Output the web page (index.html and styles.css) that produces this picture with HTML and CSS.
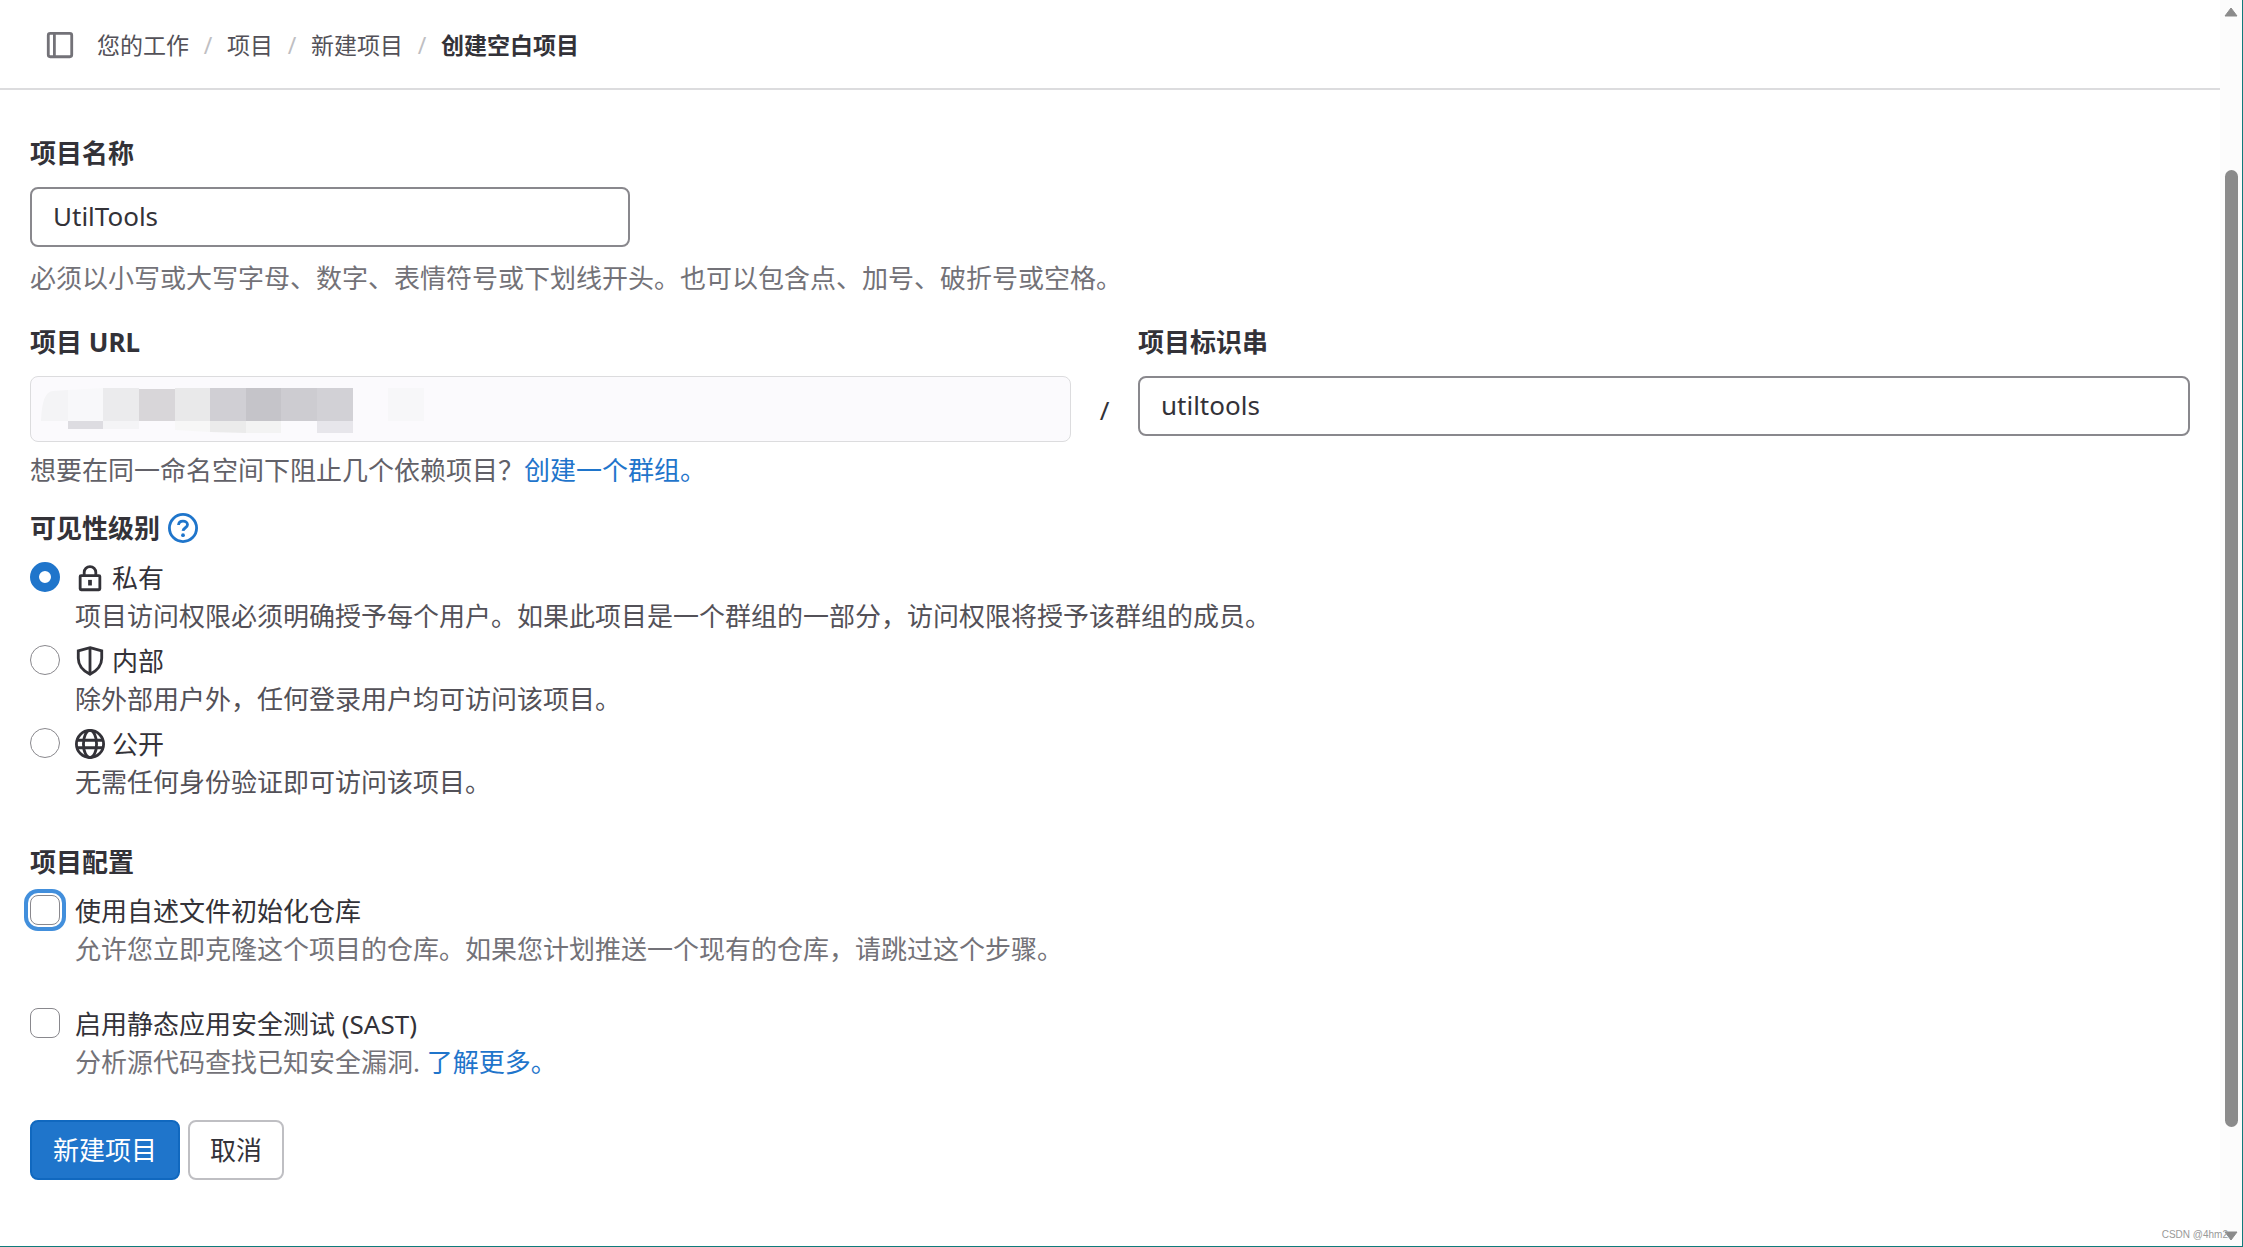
FILE: index.html
```html
<!DOCTYPE html>
<html lang="zh-CN">
<head>
<meta charset="utf-8">
<title>创建空白项目</title>
<link rel="stylesheet" href="styles.css">
</head>
<body>
<div class="window">
  <div class="page">
    <header class="topbar">
      <button class="sidebar-toggle" type="button" aria-label="侧边栏">
        <svg class="icon" viewBox="0 0 16 16" fill="none" stroke="currentColor" stroke-width="1.5"><rect x="1.75" y="1.75" width="12.5" height="12.5" rx="1"/><path d="M5 2v12"/></svg>
      </button>
      <nav aria-label="面包屑">
        <ol class="breadcrumbs">
          <li><a href="#">您的工作</a></li>
          <li><a href="#">项目</a></li>
          <li><a href="#">新建项目</a></li>
          <li><a href="#" class="current" aria-current="page">创建空白项目</a></li>
        </ol>
      </nav>
    </header>
    <main>
      <form class="form">
        <div class="field name-field">
          <label class="label" for="name">项目名称</label>
          <input class="input" id="name" type="text" value="UtilTools">
          <p class="help">必须以小写或大写字母、数字、表情符号或下划线开头。也可以包含点、加号、破折号或空格。</p>
        </div>
        <div class="path-row">
          <div class="field">
            <label class="label" for="url">项目 URL</label>
            <div class="url-box">
              <svg class="mosaic" viewBox="0 0 384 48" aria-hidden="true">
                <path fill="#f4f4f6" d="M0 34Q1 4 12 4L27 3V34Z"/>
                <path fill="#f8f8fa" d="M27 3L62 1V34H27Z"/>
                <path fill="#ebebed" d="M62 1H98V34H62Z"/>
                <path fill="#d8d6d9" d="M98 2H134V34H98Z"/>
                <path fill="#e9e9ea" d="M134 1H169V34H134Z"/>
                <path fill="#d0cfd4" d="M169 1H205V34H169Z"/>
                <path fill="#c5c4c9" d="M205 1H240V34H205Z"/>
                <path fill="#cdccd1" d="M240 1H276V34H240Z"/>
                <path fill="#d2d1d6" d="M276 1H312V34H276Z"/>
                <path fill="#f7f7f9" d="M347 1H383V34H347Z"/>
                <path fill="#dddce1" d="M27 34H62V42H27Z"/>
                <path fill="#f4f4f6" d="M62 34H98V42H62Z"/>
                <path fill="#f7f7f7" d="M134 34H169V45L134 43Z"/>
                <path fill="#ebebeb" d="M169 34H205V46L169 45Z"/>
                <path fill="#f3f3f3" d="M205 34H240V46H205Z"/>
                <path fill="#e7e6eb" d="M276 34H312V46H276Z"/>
              </svg>
              <input class="url-input" id="url" type="text" readonly>
            </div>
          </div>
          <span class="slash">/</span>
          <div class="field">
            <label class="label" for="slug">项目标识串</label>
            <input class="input" id="slug" type="text" value="utiltools">
          </div>
        </div>
        <p class="group-help">想要在同一命名空间下阻止几个依赖项目？<a href="#">创建一个群组。</a></p>

        <fieldset class="group visibility">
          <legend class="label">可见性级别
            <a class="help-link" href="#" aria-label="帮助"><svg class="icon" viewBox="0 0 16 16" fill="none" stroke="currentColor" stroke-width="1.5"><circle cx="8" cy="8" r="7.25"/><path d="M5.600 6.400C5.700 5 6.700 4.300 8 4.300s2.400.8 2.400 2c0 1.500-2.200 1.600-2.400 3.200"/><circle cx="8" cy="11.800" r="1" fill="currentColor" stroke="none"/></svg></a>
          </legend>
          <div class="choice">
            <input class="radio" type="radio" name="vis" id="private" checked>
            <div>
              <label class="choice-label" for="private"><svg class="icon" viewBox="0 0 16 16" fill="none" stroke="currentColor" stroke-width="1.5"><rect x="2.75" y="6.75" width="10.5" height="7.5" rx=".5"/><path d="M4.900 6.750V5a3.100 3.100 0 0 1 6.200 0v1.750"/><path d="M8 9v3" stroke-width="2"/></svg>私有</label>
              <p class="choice-desc">项目访问权限必须明确授予每个用户。如果此项目是一个群组的一部分，访问权限将授予该群组的成员。</p>
            </div>
          </div>
          <div class="choice">
            <input class="radio" type="radio" name="vis" id="internal">
            <div>
              <label class="choice-label" for="internal"><svg class="icon" viewBox="0 0 16 16" fill="none" stroke="currentColor" stroke-width="1.5"><path d="M8 .9L14.250 2.600V6.500c0 3.600-2.400 6.600-6.250 8.600-3.850-2-6.250-5-6.250-8.600V2.600zM8 1v14"/></svg>内部</label>
              <p class="choice-desc">除外部用户外，任何登录用户均可访问该项目。</p>
            </div>
          </div>
          <div class="choice">
            <input class="radio" type="radio" name="vis" id="public">
            <div>
              <label class="choice-label" for="public"><svg class="icon" viewBox="0 0 16 16" fill="none" stroke="currentColor" stroke-width="1.5"><circle cx="8" cy="8" r="7.25"/><ellipse cx="8" cy="8" rx="3.500" ry="7.25"/><path d="M1 6h14M1 10h14"/></svg>公开</label>
              <p class="choice-desc">无需任何身份验证即可访问该项目。</p>
            </div>
          </div>
        </fieldset>

        <fieldset class="group config">
          <legend class="label">项目配置</legend>
          <div class="choice">
            <input class="checkbox focused" type="checkbox" id="readme">
            <div>
              <label class="choice-label" for="readme">使用自述文件初始化仓库</label>
              <p class="choice-desc muted">允许您立即克隆这个项目的仓库。如果您计划推送一个现有的仓库，请跳过这个步骤。</p>
            </div>
          </div>
          <div class="choice">
            <input class="checkbox" type="checkbox" id="sast">
            <div>
              <label class="choice-label" for="sast">启用静态应用安全测试 (SAST)</label>
              <p class="choice-desc muted">分析源代码查找已知安全漏洞. <a href="#">了解更多。</a></p>
            </div>
          </div>
        </fieldset>

        <div class="actions">
          <button class="button primary" type="submit">新建项目</button>
          <button class="button" type="button">取消</button>
        </div>
      </form>
    </main>
  </div>
  <div class="scrollbar" aria-hidden="true">
    <svg class="arrow" viewBox="0 0 14 10"><path d="M7 1L13 9H1Z"/></svg>
    <div class="track"><div class="thumb"></div></div>
    <svg class="arrow" viewBox="0 0 14 10"><path d="M1 1H13L7 9Z"/></svg>
  </div>
  <span class="watermark">CSDN @4hm2</span>
</div>
</body>
</html>
```
FILE: styles.css
```css
* { box-sizing: border-box; }

body {
  margin: 0;
  color: #333238;
  background: #fff;
  font-family: "Noto Sans", "Noto Sans CJK SC", sans-serif;
  font-size: 26px;
  line-height: 38px;
}

input, button { font: inherit; color: inherit; margin: 0; }
p { margin: 0; }
a { color: #1f75cb; text-decoration: none; }

.window {
  position: relative;
  display: flex;
  min-height: 100vh;
  border-right: 1px solid #0f7b7b;
  border-bottom: 1px solid #0f7b7b;
}

.page { flex: 1; min-width: 0; }

.icon { display: block; width: 30px; height: 30px; flex: none; }

.topbar {
  display: flex;
  align-items: center;
  gap: 22px;
  height: 90px;
  padding: 2px 45px 0;
  border-bottom: 2px solid #dcdcde;
}

.sidebar-toggle {
  padding: 0;
  border: 0;
  background: none;
  color: #737278;
}

.breadcrumbs {
  display: flex;
  margin: 0;
  padding: 0;
  list-style: none;
  font-size: 23px;
  line-height: 32px;
}

.breadcrumbs li { display: flex; }
.breadcrumbs a { color: #535158; }
.breadcrumbs .current { color: #333238; font-weight: 700; }

.breadcrumbs li + li::before {
  content: "/";
  width: 38px;
  text-align: center;
  color: #bfbfc3;
}

.form { padding: 44px 30px 0; }

.field { display: flex; flex-direction: column; }

.label {
  display: flex;
  align-items: center;
  gap: 8px;
  padding: 0;
  font-weight: 700;
}

.field .label { margin-bottom: 15px; }

.input {
  width: 100%;
  height: 60px;
  padding: 0 21px 2px;
  border: 2px solid #89888d;
  border-radius: 8px;
  background: #fff;
}

.name-field .input { max-width: 600px; }

.help { margin-top: 12px; color: #737278; }

.path-row {
  display: grid;
  grid-template-columns: 1041fr 67px 1052fr;
  align-items: start;
  margin-top: 26px;
}

.slash { padding-top: 68px; text-align: center; }

.url-box {
  display: grid;
  height: 66px;
  border: 1px solid #dcdcde;
  border-radius: 8px;
  background: #fbfafd;
}

.url-box > * { grid-area: 1 / 1; }

.mosaic { width: 384px; height: 48px; margin: 10px; }

.url-input { width: 100%; border: 0; background: none; }

.group-help { margin-top: 9px; color: #626168; }

.group { margin: 0; padding: 0; border: 0; min-width: 0; }

.visibility { margin-top: 20px; }
.visibility .label { margin-bottom: 12px; }

.choice { display: flex; gap: 15px; }
.visibility .choice + .choice { margin-top: 7px; }

.choice-label { display: flex; align-items: center; gap: 7px; }
.choice-desc { color: #535158; }
.muted { color: #737278; }

.radio, .checkbox {
  appearance: none;
  flex: none;
  width: 30px;
  height: 30px;
  margin-top: 3px;
  border: 1px solid #89888d;
  background: #fff;
}

.radio { border-radius: 50%; }
.radio:checked { border: 9px solid #1f75cb; }
.checkbox { border-radius: 8px; }
.focused { box-shadow: 0 0 0 2px #fff, 0 0 0 6px #428fdc; }

.config { margin-top: 42px; }
.config .label { margin-bottom: 11px; }
.config .choice + .choice { margin-top: 37px; }

.actions { display: flex; gap: 8px; margin-top: 39px; padding-bottom: 60px; }

.button {
  height: 60px;
  padding: 0 20px;
  border: 2px solid #bfbfc3;
  border-radius: 8px;
  background: #fff;
}

.primary { padding: 0 21px; border-color: #1068bf; background: #1f75cb; color: #fff; }

.scrollbar {
  display: flex;
  flex-direction: column;
  align-items: center;
  width: 22px;
  padding: 7px 0 5px;
  background: #fcfcfc;
}

.arrow { width: 14px; height: 10px; fill: #8b8b8b; stroke: #8b8b8b; stroke-linejoin: round; }
.track { flex: 1; padding: 153px 0 104px; }
.thumb { width: 13px; height: 100%; border-radius: 7px; background: #8b8b8b; }

.watermark {
  position: absolute;
  right: 14px;
  bottom: 4px;
  color: #999;
  font: 10px/14px "Liberation Sans", sans-serif;
}
```
